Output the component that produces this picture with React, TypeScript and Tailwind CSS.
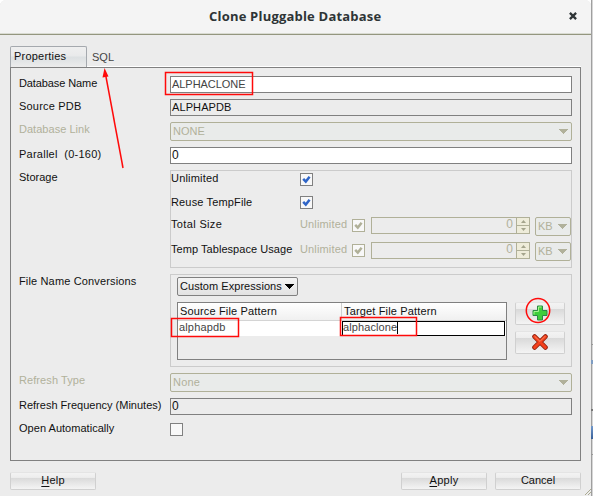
import React from "react";

const INK = "text-[#111111]";
const FADED = "text-[#b1b19b]";

function Row({ label, faded, tracking = "", children }: { label: string; faded?: boolean; tracking?: string; children: React.ReactNode }) {
  return (
    <div className="flex items-start">
      <div className={`h-[14px] w-[151px] shrink-0 whitespace-pre leading-[14px] ${tracking} ${faded ? FADED : INK}`}>{label}</div>
      <div className="w-[402px]">{children}</div>
    </div>
  );
}

function Field({ value, readOnly, className = "" }: { value: string; readOnly?: boolean; className?: string }) {
  return (
    <div className={`h-[17px] border border-[#808080] pl-px leading-[14px] ${readOnly ? "bg-[#ececec]" : "bg-white"} ${className}`}>
      {value}
    </div>
  );
}

function Triangle({ className }: { className: string }) {
  return (
    <svg width="9" height="5" viewBox="0 0 9 5" className={className} shapeRendering="crispEdges">
      <path d="M0 0h9L5 4.5H4z" fill="currentColor" />
    </svg>
  );
}

function DisabledCombo({ value, tracking = "" }: { value: string; tracking?: string }) {
  return (
    <div className={`flex h-[19px] items-center justify-between rounded-[2px] border border-[#b0b098] bg-[#e9ebea] pl-[2px] pr-[3px] ${FADED} ${tracking}`}>
      <span className="pb-px leading-[14px]">{value}</span>
      <Triangle className="" />
    </div>
  );
}

function Check({ on, faded }: { on?: boolean; faded?: boolean }) {
  return (
    <div className={`flex size-[13px] shrink-0 items-center justify-center border bg-[#f8f8f8] ${faded ? "border-[#b0b098] text-[#b0b098]" : "border-[#808080] text-[#2f65c7]"}`}>
      {on && (
        <svg width="9" height="9" viewBox="0 0 9 9">
          <path d="M1.2 3.8L3.8 6.6L7.6 1.8" stroke="currentColor" strokeWidth="2.5" fill="none" />
        </svg>
      )}
    </div>
  );
}

function SizeRow({ label, tracking }: { label: string; tracking: string }) {
  return (
    <div className="flex h-[19px] items-start">
      <div className={`w-[129px] shrink-0 leading-[14px] ${tracking}`}>{label}</div>
      <div className={`w-[52px] shrink-0 leading-[14px] tracking-[0.15px] ${FADED}`}>Unlimited</div>
      <div className="mt-[2px]"><Check on faded /></div>
      <div className={`ml-[6px] flex h-[17px] w-[159px] border border-[#b0b098] ${FADED}`}>
        <div className="flex-1 pr-[3px] text-right text-[12px] leading-[13px]">0</div>
        <div className="flex w-[13px] flex-col border-l border-[#b0b098] bg-[#eeecda]">
          <div className="flex flex-1 items-center justify-center border-b border-[#b0b098]">
            <svg width="5" height="3" viewBox="0 0 5 3"><path d="M0 3L2.5 0L5 3z" fill="#a4a48c" /></svg>
          </div>
          <div className="flex flex-1 items-center justify-center">
            <svg width="5" height="3" viewBox="0 0 5 3"><path d="M0 0h5L2.5 3z" fill="#a4a48c" /></svg>
          </div>
        </div>
      </div>
      <div className={`ml-[5px] flex h-[19px] w-[36px] items-center justify-between rounded-[2px] border border-[#b0b098] bg-[#e9ebea] pl-[2px] pr-[3px] ${FADED}`}>
        <span>KB</span>
        <Triangle className="" />
      </div>
    </div>
  );
}

const GLOSS = "rounded-[2px] border border-[#d0d0d0] border-t-[#e4e4e4] bg-[linear-gradient(#f3f3f3_0%,#ededed_28%,#d9d9d9_30%,#e6e6e6_62%,#f4f4f4_100%)]";

function PushButton({ mnemonic, rest, className = "" }: { mnemonic: string; rest: string; className?: string }) {
  return (
    <button className={`h-[18px] w-[86px] pb-[2px] text-center leading-[13px] ${GLOSS} ${className}`}>
      {mnemonic && <span className="underline underline-offset-2">{mnemonic}</span>}
      {rest}
    </button>
  );
}

export default function App() {
  return (
    <div className={`relative flex h-[496px] w-[593px] overflow-hidden bg-white font-['Liberation_Sans',Arial,sans-serif] text-[11px] ${INK}`}>
      <div className="flex h-[496px] w-[591px] shrink-0 flex-col rounded-t-[6px] bg-[#ececec]">
        <header className="flex h-[35px] shrink-0 items-center rounded-t-[6px] border-b border-[#94967f] bg-[#f4f4f4] shadow-[inset_0_-1px_0_#d9dbd2]">
          <h1 className="ml-[209px] w-[174px] whitespace-nowrap pb-[2px] font-['Open_Sans','Noto_Sans',sans-serif] text-[13px] font-bold leading-[18px] tracking-[0.2px] text-[#2e3436]">
            Clone Pluggable Database
          </h1>
          <svg className="mb-[3px] ml-[186px]" width="8" height="8" viewBox="0 0 8 8">
            <path d="M.9.9L7.1 7.1M7.1.9L.9 7.1" stroke="#2e3436" strokeWidth="2.3" />
          </svg>
        </header>

        <nav className="ml-[10px] flex h-[32px] w-[571px] shrink-0 items-end pt-[11px]">
          <div className="h-[21px] w-[77px] shrink-0 rounded-t-[2px] border border-b-0 border-[#a5a9ae] bg-[linear-gradient(#efefef_0%,#e9eaeb_45%,#dce0e2_50%,#ececec_100%)] pl-[3px] leading-[19px] tracking-[0.22px]">
            Properties
          </div>
          <div className="h-[21px] flex-1 border-b border-white pl-[5px] leading-[22px] text-[#444]">SQL</div>
        </nav>

        <main className="ml-[10px] flex h-[394px] w-[571px] shrink-0 flex-col gap-[6px] border border-[#808080] pl-[8px] pt-[8px]">
          <Row label="Database Name" tracking="tracking-[-0.1px]"><Field value="ALPHACLONE" className="tracking-[-0.05px] text-[#444]" /></Row>
          <Row label="Source PDB" tracking="tracking-[0.2px]"><Field value="ALPHAPDB" readOnly className="tracking-[0.1px]" /></Row>
          <Row label="Database Link" faded tracking="tracking-[0.03px]"><DisabledCombo value="NONE" /></Row>
          <Row label="Parallel  (0-160)" tracking="tracking-[0.25px]"><Field value="0" className="text-[12px]" /></Row>
          <Row label="Storage">
            <div className="flex h-[98px] flex-col border border-[#cbcbcb] pt-[2px]">
              <div className="flex h-[23px] items-start">
                <div className="w-[129px] leading-[11px] tracking-[0.2px]">Unlimited</div>
                <Check on />
              </div>
              <div className="flex h-[21px] items-start">
                <div className="w-[129px] leading-[12px] tracking-[0.15px]">Reuse TempFile</div>
                <Check on />
              </div>
              <div className="flex flex-col gap-[6px]">
                <SizeRow label="Total Size" tracking="tracking-[0.35px]" />
                <SizeRow label="Temp Tablespace Usage" tracking="tracking-[0.05px]" />
              </div>
            </div>
          </Row>
          <Row label="File Name Conversions" tracking="tracking-[0.15px]">
            <div className="flex h-[93px] border border-[#cbcbcb] pl-[6px] pt-[2px]">
              <div className="w-[330px]">
                <div className="flex h-[19px] w-[121px] items-center justify-between rounded-[2px] border border-[#808080] bg-[linear-gradient(#f4f4f4,#e2e2e2)] pl-[2px] pr-[3px]">
                  <span className="tracking-[0.05px]">Custom Expressions</span>
                  <Triangle className="text-black" />
                </div>
                <div className="mt-[6px] h-[58px] w-[330px] border border-[#808080]">
                  <div className="flex h-[18px] border-b border-[#d4d4d4] bg-[linear-gradient(#ffffff,#f0f0f0)] leading-[17px]">
                    <div className="w-[164px] border-r border-[#cfcfcf] pl-[2px] tracking-[0.15px]">Source File Pattern</div>
                    <div className="flex-1 pl-[2px] tracking-[0.15px]">Target File Pattern</div>
                  </div>
                  <div className="flex h-[15px] bg-white leading-[13px] text-[#444]">
                    <div className="w-[164px] pl-[1px] tracking-[0.15px]">alphapdb</div>
                    <div className="flex w-[163px] border border-black leading-[11px] tracking-[0.1px]">
                      alphaclone<span className="h-[12px] w-px bg-black" />
                    </div>
                  </div>
                </div>
              </div>
              <div className="ml-[8px] mt-[25px] flex flex-col gap-[6px]">
                <button className={`flex h-[23px] w-[50px] items-center justify-center ${GLOSS}`}>
                  <svg className="mr-px mt-[-2px]" width="16" height="16" viewBox="0 0 16 16">
                    <path d="M5.5 1h5v4.5H15v5h-4.5V15h-5v-4.5H1v-5h4.5z" fill="#3fce3c" stroke="#2b8a45" strokeLinejoin="round" />
                    <path d="M9.5 2h-3v4.5H2v3" stroke="#a5f58e" fill="none" />
                  </svg>
                </button>
                <button className={`flex h-[23px] w-[50px] items-center justify-center ${GLOSS}`}>
                  <svg className="mr-px mt-[-2px]" width="16" height="16" viewBox="0 0 16 16">
                    <path d="M2.6 2.6L13.4 13.4M13.4 2.6L2.6 13.4" stroke="#8f210f" strokeWidth="4.8" strokeLinecap="round" />
                    <path d="M2.6 2.6L13.4 13.4M13.4 2.6L2.6 13.4" stroke="#f4401c" strokeWidth="2.9" strokeLinecap="round" />
                    <path d="M2.6 2.2L8 7.4L13.2 2.2" stroke="#ff8f68" fill="none" strokeWidth=".9" />
                  </svg>
                </button>
              </div>
            </div>
          </Row>
          <Row label="Refresh Type" faded tracking="tracking-[0.08px]"><DisabledCombo value="None" tracking="tracking-[0.2px]" /></Row>
          <Row label="Refresh Frequency (Minutes)"><Field value="0" readOnly className="text-[12px]" /></Row>
          <Row label="Open Automatically" tracking="tracking-[0.03px]"><div className="pt-[2px]"><Check /></div></Row>
        </main>

        <footer className="flex items-start pl-[10px] pr-[10px] pt-[11px]">
          <PushButton mnemonic="H" rest="elp" className="tracking-[0.2px]" />
          <PushButton mnemonic="A" rest="pply" className="ml-auto tracking-[0.3px]" />
          <PushButton mnemonic="" rest="Cancel" className="ml-[8px]" />
        </footer>
      </div>
      <div className="flex w-[2px] shrink-0 flex-col bg-[linear-gradient(to_right,#9f9f9f_50%,#d6d6d6_50%)]">
        <div className="mt-[344px] h-[1px] bg-[#999999]" />
        <div className="mt-[15px] h-[4px] bg-[#7f9dc2]" />
        <div className="mt-[45px] h-[2px] bg-[#777777]" />
        <div className="mt-[15px] h-[13px] bg-[linear-gradient(#7299cb,#385f98)]" />
        <div className="mt-[15px] h-[1px] bg-[#999999]" />
      </div>

      <svg className="pointer-events-none absolute left-0 top-0" width="593" height="496" fill="none" stroke="#ff0a0a" strokeWidth="1.5">
        <path d="M123 168L105.5 74" />
        <path d="M104.5 68l4 8.5-6 1z" fill="#ff0a0a" stroke="none" />
        <rect x="165.5" y="72.5" width="87" height="22" />
        <rect x="171.5" y="318.5" width="67" height="18" />
        <rect x="340.5" y="317.5" width="76" height="18" />
        <ellipse cx="538" cy="310.5" rx="11.7" ry="12" />
        <path d="M585 495l6-6M588 495l3-3" stroke="#aaa991" strokeWidth="1" />
      </svg>
    </div>
  );
}
